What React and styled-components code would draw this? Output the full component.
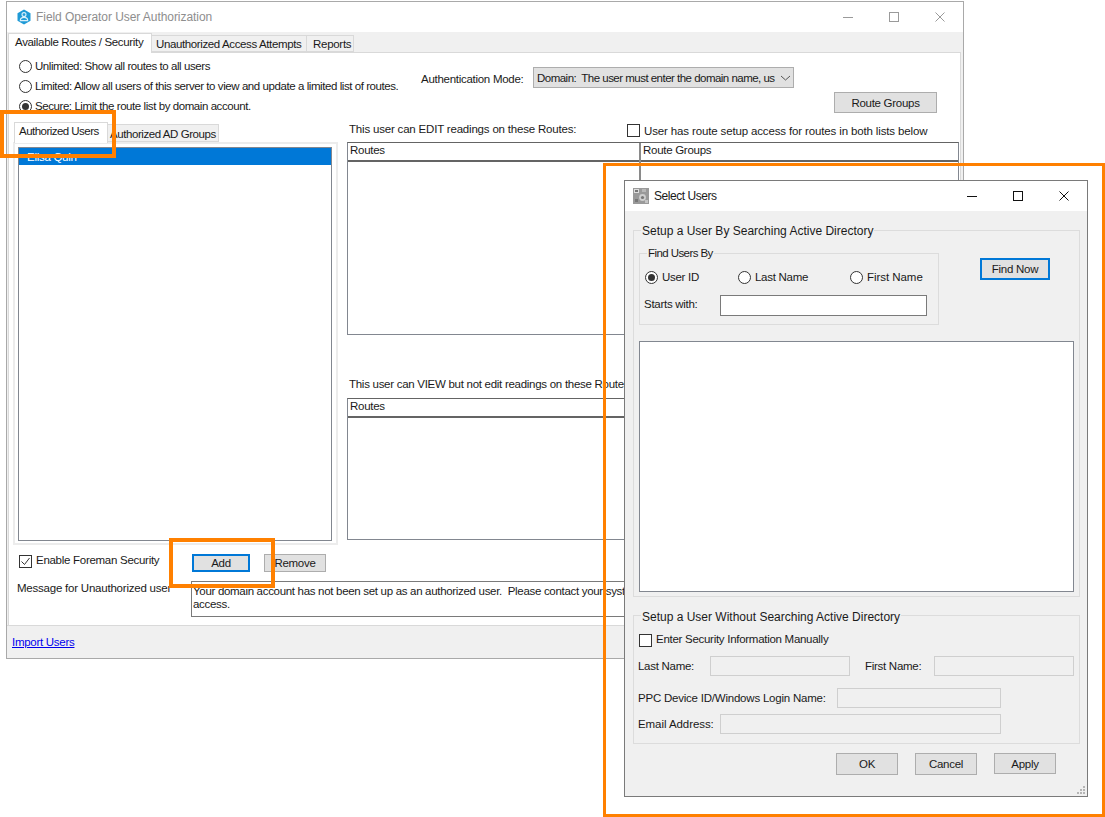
import React from "react";
import styled, { createGlobalStyle } from "styled-components";

const Global = createGlobalStyle`
  html, body { margin: 0; padding: 0; background: #fff; }
  * { box-sizing: border-box; }
  body { font-family: "Liberation Sans", Arial, sans-serif; font-size: 11.5px; letter-spacing: -0.28px; color: #1a1a1a; }
`;

const Desktop = styled.div`
  position: relative;
  width: 1105px;
  height: 817px;
  overflow: hidden;
  background: #fff;
`;

const Window = styled.div`
  position: absolute;
  left: ${p => p.$left}px;
  top: ${p => p.$top}px;
  width: ${p => p.$width}px;
  height: ${p => p.$height}px;
  border: 1px solid ${p => p.$border};
  background: #f0f0f0;
  display: flex;
  flex-direction: column;
`;

const TitleBar = styled.div`
  height: 30px;
  flex: none;
  background: #fff;
  display: flex;
  align-items: center;
  padding-left: ${p => p.$pad}px;
`;
const TitleText = styled.span`
  margin-left: ${p => p.$gap}px;
  font-size: 12px;
  letter-spacing: ${p => p.$spacing}px;
  color: ${p => p.$color};
  flex: 1;
`;
const Control = styled.span`
  width: 46px;
  height: 100%;
  display: flex;
  align-items: center;
  justify-content: center;
  color: ${p => p.$color};
`;

function Controls({ color }) {
  return (
    <>
      <Control $color={color}><svg width="12" height="12" viewBox="0 0 12 12"><path d="M1 6.5h10" stroke="currentColor" fill="none" /></svg></Control>
      <Control $color={color}><svg width="12" height="12" viewBox="0 0 12 12"><rect x="1.5" y="1.5" width="9" height="9" stroke="currentColor" fill="none" /></svg></Control>
      <Control $color={color}><svg width="12" height="12" viewBox="0 0 12 12"><path d="M1.5 1.5l9 9M10.5 1.5l-9 9" stroke="currentColor" fill="none" /></svg></Control>
    </>
  );
}

const TabStrip = styled.div`
  height: 20px;
  flex: none;
  display: flex;
  align-items: flex-end;
  padding-left: 1px;
`;
const Tab = styled.div`
  height: ${p => p.$height}px;
  width: ${p => p.$width}px;
  flex: none;
  margin-left: ${p => p.$shift || 0}px;
  margin-bottom: ${p => p.$drop || 0}px;
  background: ${p => (p.$active ? "#fff" : "#f0f0f0")};
  border: 1px solid #d9d9d9;
  border-bottom: ${p => (p.$active ? "none" : "1px solid #d9d9d9")};
  border-left: ${p => (p.$active || p.$first ? "1px solid #d9d9d9" : "none")};
  display: flex;
  align-items: ${p => (p.$active ? "flex-start" : "center")};
  padding: ${p => p.$pad};
  letter-spacing: ${p => p.$spacing}px;
  white-space: nowrap;
  position: relative;
  z-index: ${p => (p.$active ? 1 : 0)};
`;

const Panel = styled.div`
  height: 573px;
  flex: none;
  margin: 0 2px 0 1px;
  background: #fff;
  border: 1px solid #d9d9d9;
  border-bottom: none;
`;
const TopRow = styled.div`
  height: 70px;
  display: flex;
  padding-left: 10px;
`;
const RadioStack = styled.div`
  width: 402px;
  padding-top: 3px;
`;
const RadioRow = styled.label`
  height: 20px;
  display: flex;
  align-items: center;
  gap: ${p => p.$gap || 3}px;
  letter-spacing: ${p => p.$spacing}px;
  white-space: nowrap;
`;
const RadioMark = styled.span`
  width: 13px;
  height: 13px;
  flex: none;
  border: 1px solid #333;
  border-radius: 50%;
  background: #fff;
  display: flex;
  align-items: center;
  justify-content: center;
  &::after {
    content: "";
    display: ${p => (p.$on ? "block" : "none")};
    width: 7px;
    height: 7px;
    border-radius: 50%;
    background: #333;
  }
`;
const AuthCol = styled.div`
  width: 516px;
  padding-top: 14px;
  display: flex;
  flex-direction: column;
`;
const AuthRow = styled.div`
  display: flex;
  align-items: center;
`;
const AuthLabel = styled.span`
  width: 112px;
  flex: none;
  white-space: nowrap;
  padding-top: 2px;
`;
const Select = styled.div`
  width: 261px;
  height: 21px;
  background: #e1e1e1;
  border: 1px solid #adadad;
  display: flex;
  align-items: center;
  padding-left: 3px;
  white-space: pre;
`;
const SelectText = styled.span`
  width: 243px;
  flex: none;
  letter-spacing: -0.52px;
`;
const Button = styled.div`
  width: ${p => p.$width}px;
  height: ${p => p.$height}px;
  flex: none;
  background: #e1e1e1;
  border: ${p => (p.$focus ? "2px solid #0078d7" : "1px solid #adadad")};
  display: flex;
  align-items: center;
  justify-content: center;
  margin-left: ${p => p.$left || 0}px;
  margin-top: ${p => p.$top || 0}px;
  align-self: ${p => p.$align || "auto"};
`;

const Columns = styled.div`
  display: flex;
  padding-left: 4px;
`;
const LeftCol = styled.div`
  width: 325px;
  flex: none;
`;
const InnerTabs = styled.div`
  height: 20px;
  display: flex;
  align-items: flex-end;
  padding-left: 1px;
`;
const InnerPanel = styled.div`
  height: 403px;
  margin-top: -1px;
  border: 2px solid #ececec;
  padding: 3px 4px 2px 3px;
`;
const ListBox = styled.div`
  height: ${p => p.$height}px;
  width: ${p => (p.$width ? `${p.$width}px` : "auto")};
  margin-top: ${p => p.$top || 0}px;
  flex: none;
  background: #fff;
  border: 1px solid #828790;
`;
const SelectedRow = styled.div`
  height: 17px;
  background: #0078d7;
  color: #fff;
  padding: 3px 0 0 8px;
`;
const RightCol = styled.div`
  margin-left: 9px;
  width: 612px;
  flex: none;
`;
const RightHead = styled.div`
  height: 19px;
  display: flex;
  align-items: flex-start;
  padding-left: 2px;
`;
const HeadLabel = styled.span`
  width: 278px;
  flex: none;
  white-space: nowrap;
  letter-spacing: -0.19px;
`;
const CheckRow = styled.label`
  display: flex;
  align-items: center;
  gap: 4px;
  white-space: nowrap;
  letter-spacing: ${p => (p.$spacing !== undefined ? `${p.$spacing}px` : "inherit")};
  margin-top: ${p => p.$top || 0}px;
  width: ${p => (p.$width ? `${p.$width}px` : "auto")};
  margin-left: ${p => p.$left || 0}px;
  flex: none;
`;
const CheckText = styled.span`
  padding-bottom: ${p => (p.$lift ? 2 : 0)}px;
`;
const CheckMark = styled.span`
  width: 13px;
  height: 13px;
  flex: none;
  border: 1px solid #333;
  background: #fff;
  display: flex;
  align-items: center;
  justify-content: center;
  color: #333;
`;
const Table = styled.div`
  height: ${p => p.$height}px;
  display: flex;
  border: 1px solid #828790;
  border-top-color: #646464;
`;
const TableCol = styled.div`
  width: ${p => (p.$width ? `${p.$width}px` : "auto")};
  flex: ${p => (p.$width ? "none" : "1")};
  border-right: ${p => (p.$width ? "2px solid #8a8a8a" : "none")};
`;
const TableHead = styled.div`
  height: 19px;
  background: #fff;
  border-bottom: 2px solid #646464;
  padding: 1px 0 0 2px;
`;
const SecondLabel = styled.div`
  margin-top: 43px;
  height: 14px;
  padding-left: 2px;
  margin-bottom: 6px;
  white-space: nowrap;
`;
const BottomRow = styled.div`
  display: flex;
  align-items: flex-start;
  padding-left: 10px;
  margin-top: 9px;
`;
const MessageRow = styled.div`
  display: flex;
  padding-left: 8px;
  margin-top: 9px;
`;
const MessageLabel = styled.span`
  width: 174px;
  flex: none;
  white-space: nowrap;
  padding-top: 1px;
  letter-spacing: -0.22px;
`;
const MessageBox = styled.div`
  width: 767px;
  height: 36px;
  flex: none;
  border: 1px solid #7a7a7a;
  padding: 3px 1px;
  line-height: 13px;
  letter-spacing: -0.31px;
  white-space: pre-wrap;
`;
const Footer = styled.div`
  flex: 1;
  border-top: 1px solid #d9d9d9;
  display: flex;
  align-items: center;
  padding-left: 5px;
`;
const Link = styled.a`
  color: #0000ee;
  text-decoration: underline;
`;

const DialogBody = styled.div`
  flex: 1;
  position: relative;
  padding: 19px 7px 0 8px;
`;
const Group = styled.div`
  position: relative;
  width: ${p => p.$width}px;
  height: ${p => p.$height}px;
  margin-top: ${p => p.$top || 0}px;
  border: 1px solid #dcdcdc;
  padding: ${p => p.$pad};
  flex: none;
`;
const Legend = styled.span`
  position: absolute;
  left: ${p => p.$left}px;
  top: ${p => p.$raise}px;
  padding: 0 1px;
  background: #f0f0f0;
  white-space: nowrap;
  font-size: ${p => p.$size}px;
  letter-spacing: ${p => p.$spacing}px;
`;
const FindRow = styled.div`
  display: flex;
  align-items: flex-start;
`;
const RadioGrid = styled.div`
  display: grid;
  grid-template-columns: 93px 112px auto;
  padding-left: 5px;
`;
const StartsRow = styled.div`
  display: flex;
  align-items: center;
  padding-left: 4px;
  margin-top: 8px;
`;
const FieldLabel = styled.span`
  width: ${p => p.$width}px;
  margin-left: ${p => p.$left || 0}px;
  padding-bottom: ${p => p.$lift || 0}px;
  letter-spacing: ${p => (p.$spacing !== undefined ? `${p.$spacing}px` : "inherit")};
  flex: none;
  white-space: nowrap;
`;
const Input = styled.div`
  width: ${p => p.$width}px;
  height: ${p => p.$height || 20}px;
  flex: none;
  background: ${p => (p.$disabled ? "#f0f0f0" : "#fff")};
  border: 1px solid ${p => (p.$disabled ? "#cfcfcf" : "#7a7a7a")};
`;
const FieldRow = styled.div`
  display: flex;
  align-items: center;
  padding-left: 4px;
  margin-top: ${p => p.$top}px;
`;
const ButtonRow = styled.div`
  display: flex;
  justify-content: flex-end;
  align-items: flex-start;
  gap: 17px;
  margin-top: 9px;
  padding-right: 24px;
`;
const Grip = styled.svg`
  position: absolute;
  right: 1px;
  bottom: 1px;
`;
const Annotation = styled.div`
  position: absolute;
  left: ${p => p.$left}px;
  top: ${p => p.$top}px;
  width: ${p => p.$width}px;
  height: ${p => p.$height}px;
  border: ${p => p.$line}px solid #ff8000;
  pointer-events: none;
`;

const Radio = ({ on, children, gap, spacing }) => (
  <RadioRow $gap={gap} $spacing={spacing}><RadioMark $on={on} />{children}</RadioRow>
);
const Check = ({ on, lift, children, ...rest }) => (
  <CheckRow {...rest}>
    <CheckMark>
      {on && <svg width="11" height="11" viewBox="0 0 11 11"><path d="M1.5 5.5l3 3 5-6.5" stroke="currentColor" strokeWidth="1" fill="none" /></svg>}
    </CheckMark>
    <CheckText $lift={lift}>{children}</CheckText>
  </CheckRow>
);

const AppIcon = () => (
  <svg width="16" height="16" viewBox="0 0 16 16">
    <path d="M8 0.5l6.5 3.7v7.6L8 15.5l-6.5-3.7V4.2z" fill="#1f9ad6" />
    <circle cx="8" cy="5.6" r="2" fill="none" stroke="#d9f0fb" strokeWidth="1.1" />
    <path d="M4.3 11.6c0-2 1.6-3.2 3.7-3.2s3.7 1.2 3.7 3.2z" fill="none" stroke="#d9f0fb" strokeWidth="1.1" />
  </svg>
);
const DialogIcon = () => (
  <svg width="16" height="16" viewBox="0 0 16 16">
    <rect width="16" height="16" fill="#9a9a9a" />
    <rect x="1" y="1" width="5" height="4" fill="#dedede" />
    <rect x="2" y="2" width="3" height="2" fill="#777" />
    <circle cx="9.5" cy="9.5" r="3.4" fill="#cfcfcf" />
    <circle cx="9.5" cy="9.5" r="1.6" fill="#777" />
    <rect x="9" y="1" width="4" height="3" fill="#b8b8b8" />
    <rect x="2" y="11" width="3" height="3" fill="#777" />
    <rect x="12" y="12" width="3" height="3" fill="#c4c4c4" />
  </svg>
);

export default function App() {
  return (
    <Desktop>
      <Global />
      <Window $left={6} $top={1} $width={958} $height={658} $border="#a9a9a9">
        <TitleBar $pad={9}>
          <AppIcon />
          <TitleText $gap={4} $color="#8e8e8e" $spacing={-0.06}>Field Operator User Authorization</TitleText>
          <Controls color="#9a9a9a" />
        </TitleBar>
        <TabStrip>
          <Tab $active $first $width={144} $height={20} $drop={-1} $pad="2px 0 0 6px" $spacing={-0.33}>Available Routes / Security</Tab>
          <Tab $width={155} $height={17} $pad="0 0 0 4px" $spacing={-0.38}>Unauthorized Access Attempts</Tab>
          <Tab $width={47} $height={17} $pad="0 0 0 6px" $spacing={-0.28}>Reports</Tab>
        </TabStrip>
        <Panel>
          <TopRow>
            <RadioStack>
              <Radio spacing={-0.43}>Unlimited: Show all routes to all users</Radio>
              <Radio spacing={-0.43}>Limited: Allow all users of this server to view and update a limited list of routes.</Radio>
              <Radio on spacing={-0.43}>Secure: Limit the route list by domain account.</Radio>
            </RadioStack>
            <AuthCol>
              <AuthRow>
                <AuthLabel>Authentication Mode:</AuthLabel>
                <Select>
                  <SelectText>Domain:  The user must enter the domain name, us</SelectText>
                  <svg width="11" height="6" viewBox="0 0 11 6"><path d="M1 1l4.5 4L10 1" stroke="#555" fill="none" /></svg>
                </Select>
              </AuthRow>
              <Button $width={103} $height={21} $top={4} $align="flex-end">Route Groups</Button>
            </AuthCol>
          </TopRow>
          <Columns>
            <LeftCol>
              <InnerTabs>
                <Tab $active $first $width={94} $height={21} $pad="2px 0 0 4px" $spacing={-0.53}>Authorized Users</Tab>
                <Tab $width={112} $height={18} $drop={1} $shift={-1} $pad="2px 0 0 3px" $spacing={-0.43}>Authorized AD Groups</Tab>
              </InnerTabs>
              <InnerPanel>
                <ListBox $height={394}>
                  <SelectedRow>Elisa Quin</SelectedRow>
                </ListBox>
              </InnerPanel>
            </LeftCol>
            <RightCol>
              <RightHead>
                <HeadLabel>This user can EDIT readings on these Routes:</HeadLabel>
                <Check $top={1} $spacing={-0.14}>User has route setup access for routes in both lists below</Check>
              </RightHead>
              <Table $height={193}>
                <TableCol $width={293}><TableHead>Routes</TableHead></TableCol>
                <TableCol><TableHead>Route Groups</TableHead></TableCol>
              </Table>
              <SecondLabel>This user can VIEW but not edit readings on these Routes:</SecondLabel>
              <Table $height={142}>
                <TableCol $width={293}><TableHead>Routes</TableHead></TableCol>
                <TableCol><TableHead>Route Groups</TableHead></TableCol>
              </Table>
            </RightCol>
          </Columns>
          <BottomRow>
            <Check on lift $width={173}>Enable Foreman Security</Check>
            <Button $focus $width={58} $height={18}>Add</Button>
            <Button $width={62} $height={18} $left={14}>Remove</Button>
          </BottomRow>
          <MessageRow>
            <MessageLabel>Message for Unauthorized user</MessageLabel>
            <MessageBox>{"Your domain account has not been set up as an authorized user.  Please contact your system administrator for\naccess."}</MessageBox>
          </MessageRow>
        </Panel>
        <Footer><Link>Import Users</Link></Footer>
      </Window>

      <Window $left={624} $top={180} $width={464} $height={617} $border="#7a7a7a">
        <TitleBar $pad={8}>
          <DialogIcon />
          <TitleText $gap={5} $color="#1a1a1a" $spacing={-0.45}>Select Users</TitleText>
          <Controls color="#111" />
        </TitleBar>
        <DialogBody>
          <Group $width={447} $height={367} $pad="22px 5px 0 5px">
            <Legend $left={7} $raise={-7} $size={12} $spacing={0}>Setup a User By Searching Active Directory</Legend>
            <FindRow>
              <Group $width={300} $height={72} $pad="13px 0 0 0">
                <Legend $left={7} $raise={-7} $size={11.5} $spacing={-0.58}>Find Users By</Legend>
                <RadioGrid>
                  <Radio on gap={4} spacing={-0.28}>User ID</Radio>
                  <Radio gap={4} spacing={-0.28}>Last Name</Radio>
                  <Radio gap={4} spacing={-0.05}>First Name</Radio>
                </RadioGrid>
                <StartsRow>
                  <FieldLabel $width={76} $lift={4}>Starts with:</FieldLabel>
                  <Input $width={207} $height={21} />
                </StartsRow>
              </Group>
              <Button $focus $width={70} $height={22} $left={41} $top={5}>Find Now</Button>
            </FindRow>
            <ListBox $width={435} $height={251} $top={16} />
          </Group>
          <Group $width={447} $height={129} $top={18} $pad="17px 0 0 0">
            <Legend $left={7} $raise={-6} $size={12} $spacing={0}>Setup a User Without Searching Active Directory</Legend>
            <Check lift $left={5}>Enter Security Information Manually</Check>
            <FieldRow $top={9}>
              <FieldLabel $width={72}>Last Name:</FieldLabel>
              <Input $disabled $width={140} />
              <FieldLabel $width={69} $left={15}>First Name:</FieldLabel>
              <Input $disabled $width={140} />
            </FieldRow>
            <FieldRow $top={12}>
              <FieldLabel $width={199} $spacing={-0.22}>PPC Device ID/Windows Login Name:</FieldLabel>
              <Input $disabled $width={164} />
            </FieldRow>
            <FieldRow $top={6}>
              <FieldLabel $width={82} $spacing={-0.07}>Email Address:</FieldLabel>
              <Input $disabled $width={281} />
            </FieldRow>
          </Group>
          <ButtonRow>
            <Button $width={62} $height={22}>OK</Button>
            <Button $width={62} $height={22}>Cancel</Button>
            <Button $width={62} $height={21}>Apply</Button>
          </ButtonRow>
          <Grip width="10" height="10" viewBox="0 0 10 10" fill="#b5b5b5">
            <rect x="7" y="1" width="2" height="2" />
            <rect x="4" y="4" width="2" height="2" />
            <rect x="7" y="4" width="2" height="2" />
            <rect x="1" y="7" width="2" height="2" />
            <rect x="4" y="7" width="2" height="2" />
            <rect x="7" y="7" width="2" height="2" />
          </Grip>
        </DialogBody>
      </Window>

      <Annotation $left={0} $top={110} $width={116} $height={48} $line={4} />
      <Annotation $left={169} $top={538} $width={106} $height={50} $line={4} />
      <Annotation $left={603} $top={163} $width={502} $height={654} $line={3} />
    </Desktop>
  );
}
